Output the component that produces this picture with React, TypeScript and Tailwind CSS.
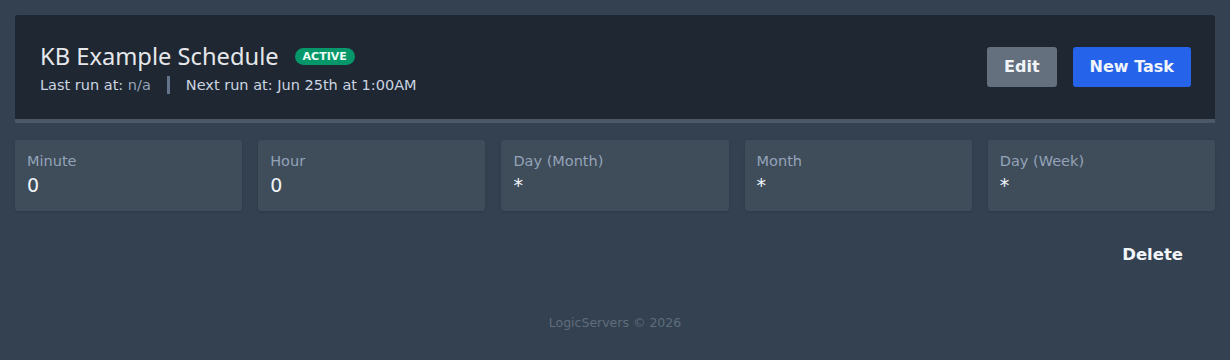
import React from "react";

const fields = [
  { label: "Minute", value: "0" },
  { label: "Hour", value: "0" },
  { label: "Day (Month)", value: "*" },
  { label: "Month", value: "*" },
  { label: "Day (Week)", value: "*" },
];

export default function App() {
  return (
    <div className="min-h-[360px] bg-[#334151] pt-[15px] font-['DejaVu_Sans',sans-serif]">
      <div className="mx-auto w-[1200px]">
        <div className="flex items-center justify-between rounded-t-[3px] border-b-4 border-[#4b5867] bg-[#1f2732] pl-[25px] pr-[24px] pt-[24px] pb-[24px]">
          <div className="flex flex-col">
            <div className="flex items-center gap-4">
              <h1 className="font-['Noto_Sans',sans-serif] text-[23.7px] leading-[34px] text-[#e5e7eb]">KB Example Schedule</h1>
              <span className="rounded-full bg-[#059669] px-2 py-[2px] text-[11px] font-semibold leading-[13px] tracking-normal text-[#ecfdf5]">ACTIVE</span>
            </div>
            <div className="mt-[2px] flex items-center text-[14.5px] leading-[20px] text-[#cbd5e1]">
              <span>
                Last run at: <span className="text-[#94a3b8]">n/a</span>
              </span>
              <span className="mx-4 h-[18px] w-[3px] bg-[#64748b]" />
              <span>Next run at: Jun 25th at 1:00AM</span>
            </div>
          </div>
          <div className="flex items-center gap-4">
            <button className="h-10 rounded-[3px] bg-[#64707d] px-[17px] text-[16px] font-bold text-[#f1f5f9]">Edit</button>
            <button className="h-10 rounded-[3px] bg-[#2563eb] px-[17px] text-[16px] font-bold text-[#f1f5f9]">New Task</button>
          </div>
        </div>

        <div className="mt-[17px] grid grid-cols-5 gap-4">
          {fields.map((f) => (
            <div key={f.label} className="h-[71px] rounded-[3px] bg-[#3f4d5b] px-3 pt-[12px] shadow-sm">
              <div className="text-[14.5px] leading-[18px] text-[#94a3b8]">{f.label}</div>
              <div className="mt-[3px] text-[19px] leading-[24px] text-[#f1f5f9]">{f.value}</div>
            </div>
          ))}
        </div>

        <div className="mt-[24px] flex justify-end pr-[16px]">
          <button className="px-4 py-2 text-[16.5px] font-bold text-[#f1f5f9]">Delete</button>
        </div>

        <div className="mt-[38px] text-center text-[12.5px] text-[#5f6d7c]">LogicServers © 2026</div>
      </div>
    </div>
  );
}
